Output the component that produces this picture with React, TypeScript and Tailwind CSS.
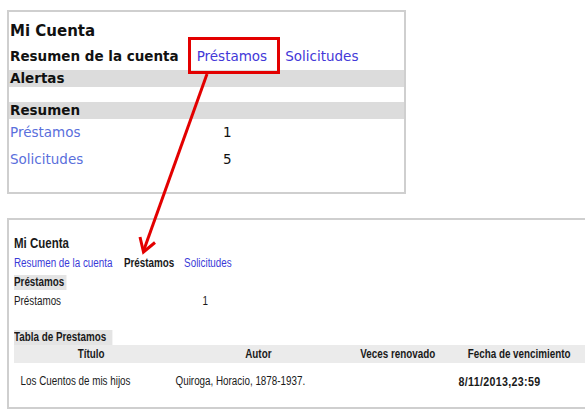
export default function App() {
  const top = { fontFamily: '"DejaVu Sans", Verdana, sans-serif' };
  const bottom = { fontFamily: '"Liberation Sans", Arial, sans-serif' };

  return (
    <div className="relative w-[585px] h-[414px] overflow-hidden bg-white text-[#111]">
      {/* top screenshot: resumen */}
      <div
        style={top}
        className="ml-[7px] mt-[10px] w-[399px] h-[184px] border-2 border-[#cfcfcf] pt-[10px]"
      >
        <div className="pl-[1px] text-[15px] leading-[18px] font-bold">Mi Cuenta</div>
        <div className="mt-[7px] pl-[1px] flex gap-[18px] text-[13.5px] leading-[18px]">
          <span className="font-bold">Resumen de la cuenta</span>
          <span className="text-[#4338d8]">Préstamos</span>
          <span className="text-[#4338d8]">Solicitudes</span>
        </div>
        <div className="mt-[5px] h-[17px] bg-[#dcdcdc] pl-[1px] text-[13.5px] leading-[17px] font-bold">
          Alertas
        </div>
        <div className="mt-[15px] h-[17px] bg-[#dcdcdc] pl-[1px] text-[13.5px] leading-[17px] font-bold">
          Resumen
        </div>
        <div className="mt-[4px] pl-[1px] flex text-[13.5px] leading-[18px]">
          <span className="w-[213px] text-[#5a6fdc]">Préstamos</span>
          <span>1</span>
        </div>
        <div className="mt-[9px] pl-[1px] flex text-[13.5px] leading-[18px]">
          <span className="w-[213px] text-[#5a6fdc]">Solicitudes</span>
          <span>5</span>
        </div>
      </div>

      {/* bottom screenshot: préstamos */}
      <div
        style={bottom}
        className="ml-[7px] mt-[24px] w-[620px] h-[191px] border-2 border-[#cfcfcf] pl-[5px] pt-[15px] text-[#1a1a1a]"
      >
        <div className="w-[720px] origin-top-left scale-x-[0.82] text-[12px] leading-[15px]">
          <div className="text-[14px] leading-[16px] font-bold">Mi Cuenta</div>
          <div className="mt-[5px] flex">
            <span className="text-[#3a3ad8]">Resumen de la cuenta</span>
            <span className="ml-[14px] font-bold">Préstamos</span>
            <span className="ml-[12px] text-[#3a3ad8]">Solicitudes</span>
          </div>
          <div className="mt-[4px] flex">
            <span className="bg-[#e4e4e4] pr-[3px] font-bold">Préstamos</span>
          </div>
          <div className="mt-[4px] flex">
            <span className="w-[230px]">Préstamos</span>
            <span>1</span>
          </div>
          <div className="mt-[21px] flex">
            <span className="bg-[#e4e4e4] pr-[7px] font-bold">Tabla de Prestamos</span>
          </div>
          <div className="grid grid-cols-[188px_220px_120px_176px] h-[18px] bg-[#ebebeb] leading-[18px] font-bold text-center">
            <span>Título</span>
            <span>Autor</span>
            <span>Veces renovado</span>
            <span>Fecha de vencimiento</span>
          </div>
          <div className="grid grid-cols-[188px_220px_120px_176px] pt-[11px]">
            <span className="pl-[8px]">Los Cuentos de mis hijos</span>
            <span className="pl-[9px]">Quiroga, Horacio, 1878-1937.</span>
            <span></span>
            <span className="pl-[14px] text-[13px] tracking-[0.4px] font-bold">8/11/2013,23:59</span>
          </div>
        </div>
      </div>

      {/* callout */}
      <svg className="absolute inset-0 pointer-events-none" width="585" height="414">
        <rect x="189.5" y="38.5" width="89" height="34" fill="none" stroke="#e30000" strokeWidth="3" />
        <line x1="207" y1="74" x2="143.5" y2="251" stroke="#e30000" strokeWidth="3" />
        <polyline
          points="140,237 143.5,252 155,242.5"
          fill="none"
          stroke="#e30000"
          strokeWidth="3"
          strokeLinejoin="miter"
        />
      </svg>
    </div>
  );
}
